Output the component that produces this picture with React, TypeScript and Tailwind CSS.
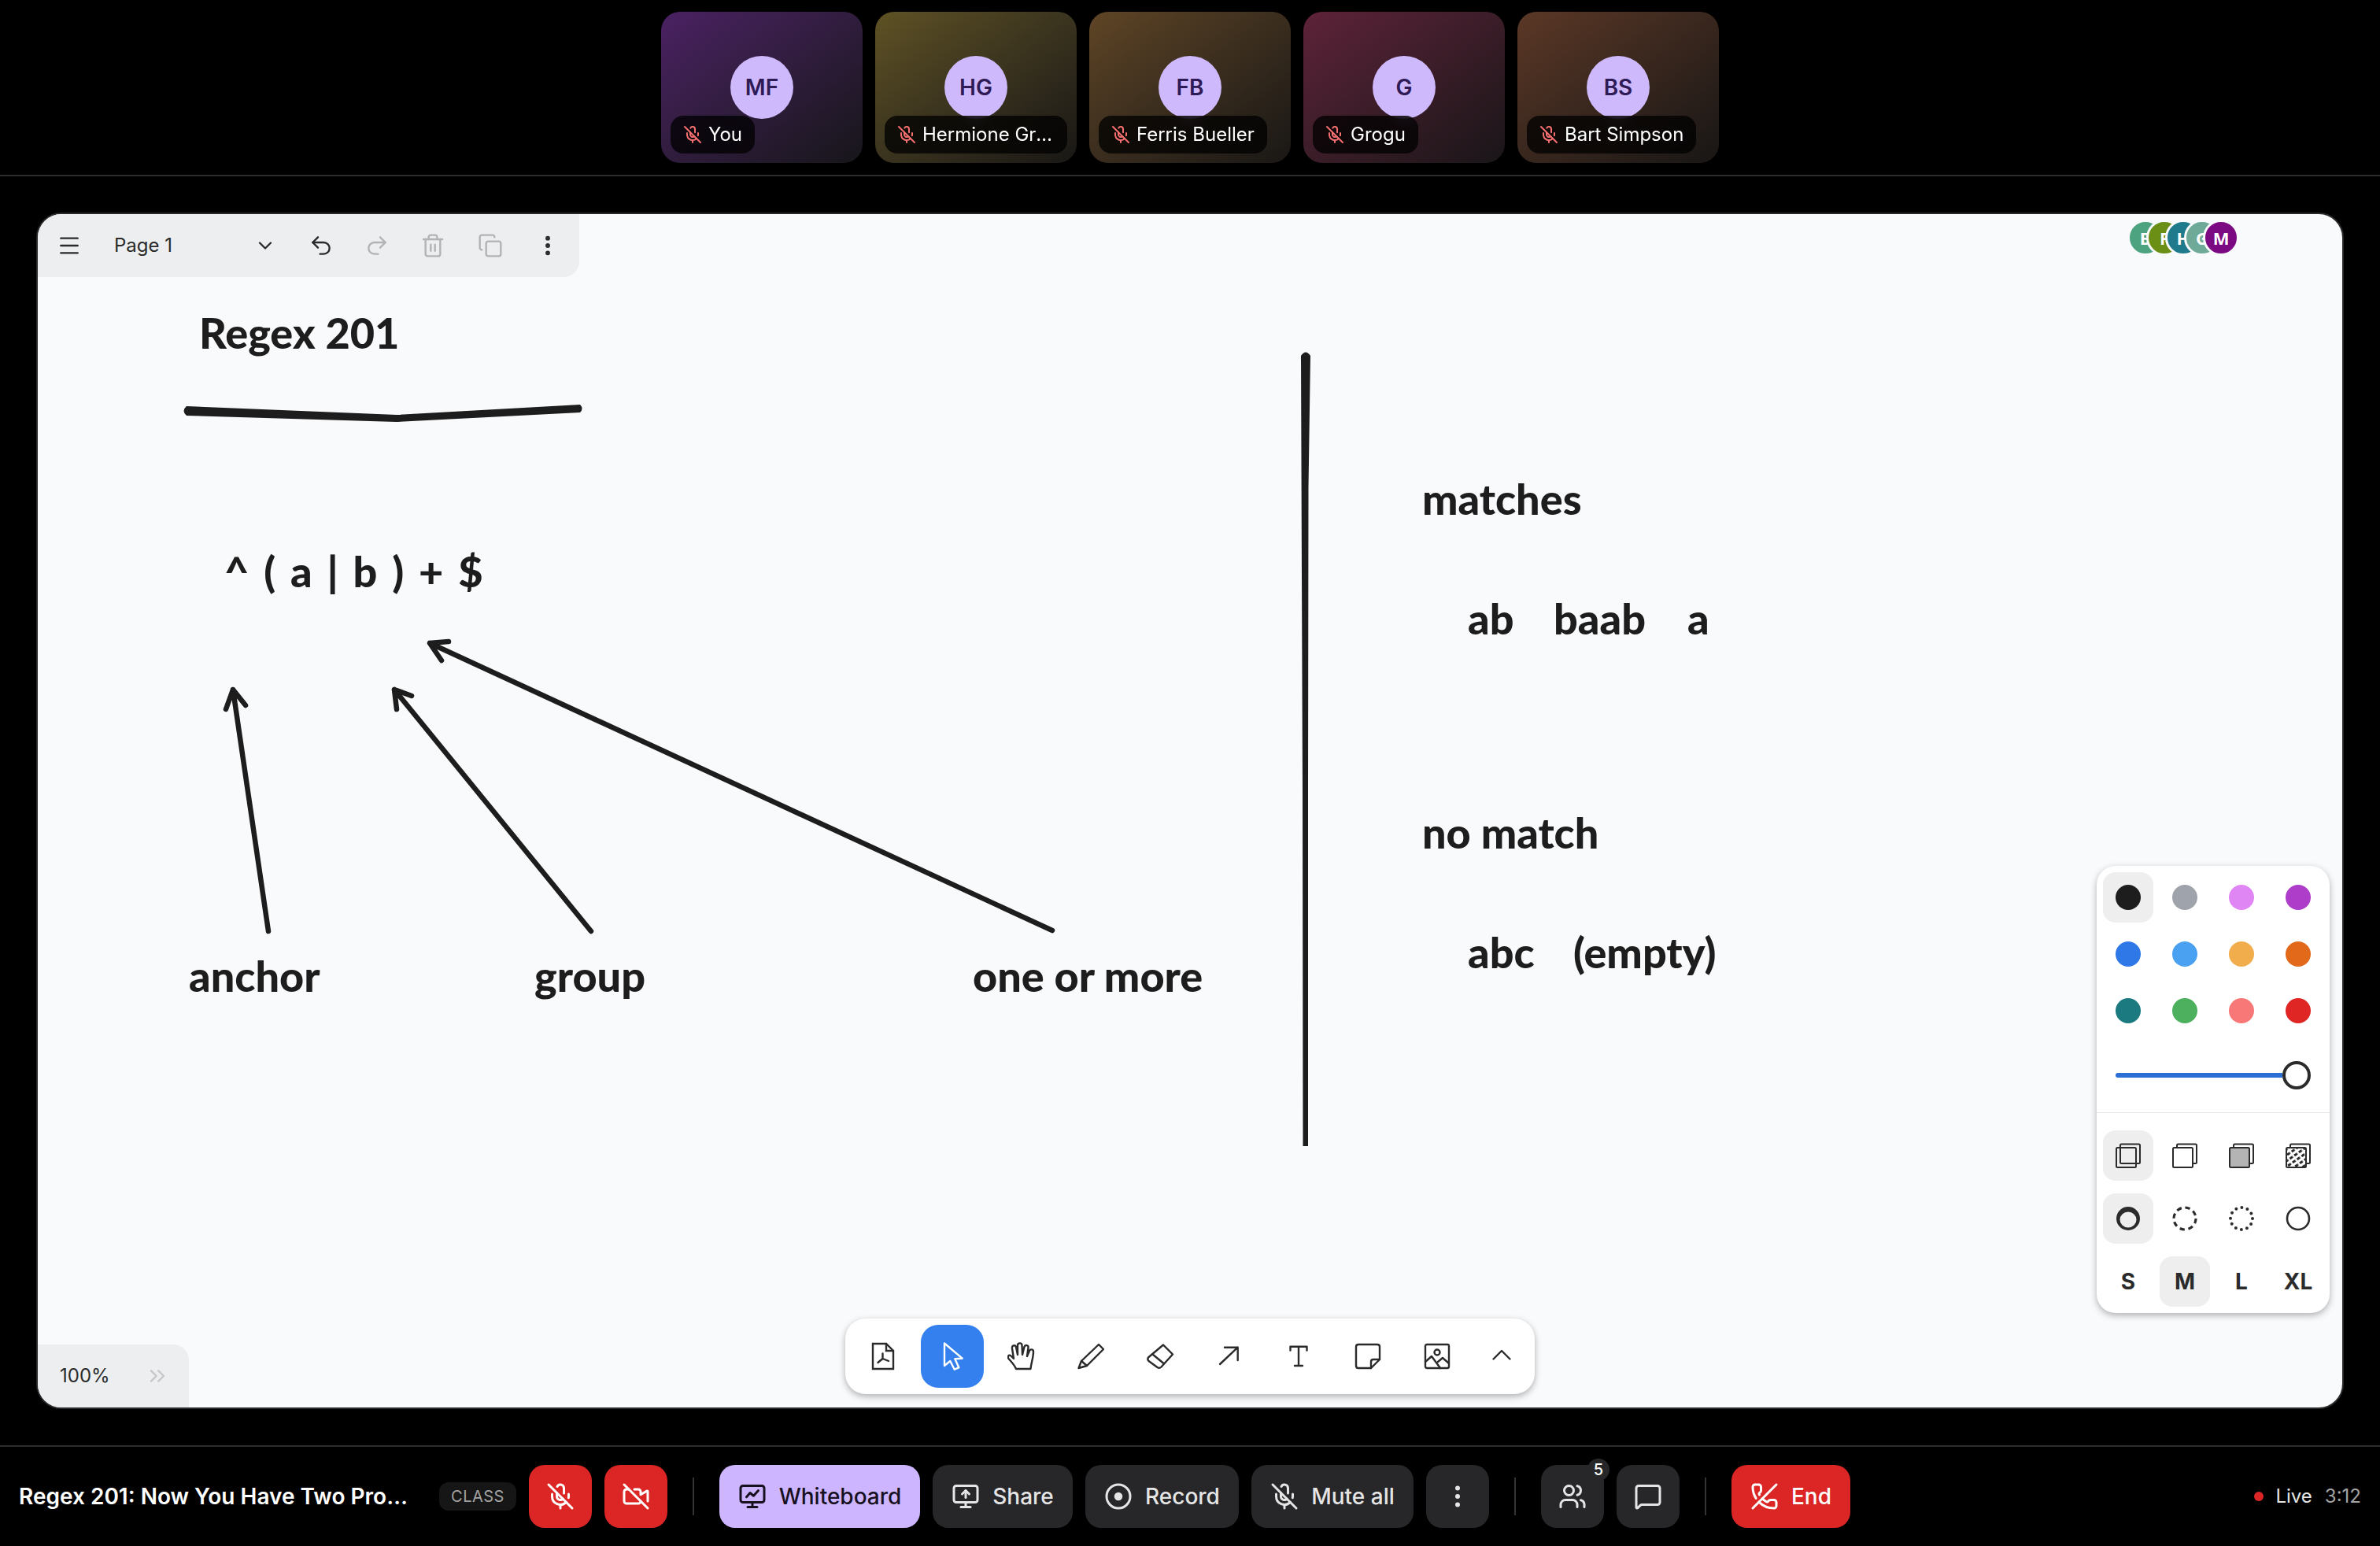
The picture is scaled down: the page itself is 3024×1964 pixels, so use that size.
import {
  ChevronDown,
  ChevronsRight,
  Copy,
  EllipsisVertical,
  Menu,
  MessageSquare,
  MicOff,
  MonitorUp,
  PhoneOff,
  Redo2,
  Trash2,
  Undo2,
  Users,
  VideoOff,
} from "lucide-react";
import type { ReactNode } from "react";

const tiles = [
  { initials: "MF", name: "You", bg: "bg-gradient-to-br from-[#4b2163] to-[#17151a]" },
  { initials: "HG", name: "Hermione Granger", bg: "bg-gradient-to-br from-[#5f5224] to-[#191715]" },
  { initials: "FB", name: "Ferris Bueller", bg: "bg-gradient-to-br from-[#5f4525] to-[#191715]" },
  { initials: "G", name: "Grogu", bg: "bg-gradient-to-br from-[#5e2239] to-[#191518]" },
  { initials: "BS", name: "Bart Simpson", bg: "bg-gradient-to-br from-[#5c3826] to-[#181615]" },
];

const colors = [
  "bg-[#1d1d1d]",
  "bg-[#9fa3ab]",
  "bg-[#e085f4]",
  "bg-[#ae3ec9]",
  "bg-[#2f78e8]",
  "bg-[#4ba1f1]",
  "bg-[#f1ac4b]",
  "bg-[#e16919]",
  "bg-[#1a7a80]",
  "bg-[#4cb05e]",
  "bg-[#f87777]",
  "bg-[#e02525]",
];

const viewers = [
  { letter: "B", bg: "bg-[#4da27f]" },
  { letter: "F", bg: "bg-[#6b8e14]" },
  { letter: "H", bg: "bg-[#1f7a8c]" },
  { letter: "G", bg: "bg-[#6fa998]" },
  { letter: "M", bg: "bg-[#7b0a82]" },
];

function Tile({ initials, name, bg }: { initials: string; name: string; bg: string }) {
  return (
    <div className={`relative flex h-[192px] w-[256px] items-center justify-center rounded-[24px] ${bg}`}>
      <div className="flex size-[80px] items-center justify-center rounded-full bg-[#cfb9fd] text-[28px] font-semibold text-[#2e1a55]">
        {initials}
      </div>
      <div className="absolute bottom-3 left-3 flex h-[48px] max-w-[232px] items-center gap-2 rounded-[16px] bg-black/75 px-4 backdrop-blur-sm">
        <MicOff size={24} className="shrink-0 text-[#f87171]" />
        <span className="truncate text-[24px] text-white">{name}</span>
      </div>
    </div>
  );
}

function ToolIcon({ children }: { children: ReactNode }) {
  return (
    <svg
      width="36"
      height="36"
      viewBox="0 0 36 36"
      fill="none"
      stroke="#2a2a2a"
      strokeWidth="2.4"
      strokeLinecap="round"
      strokeLinejoin="round"
    >
      {children}
    </svg>
  );
}

function ToolButton({ children, active }: { children: ReactNode; active?: boolean }) {
  return (
    <div
      className={`flex size-[80px] items-center justify-center rounded-[22px] ${active ? "bg-[#3480ee]" : ""}`}
    >
      {children}
    </div>
  );
}

function BottomToolbar() {
  return (
    <div className="absolute bottom-[17px] left-1/2 flex h-[96px] w-[876px] -translate-x-1/2 items-center gap-2 rounded-[26px] bg-white p-2 shadow-[0_3px_8px_rgba(0,0,0,0.3)]">
      <ToolButton>
        <ToolIcon>
          <path d="M5 2H22L31 11V34H5Z" strokeLinejoin="miter" />
          <path d="M22 2V11H31" strokeLinejoin="miter" />
          <path d="M17.5 14.5V21L11.5 26M17.5 21L25 24" />
        </ToolIcon>
      </ToolButton>
      <ToolButton active>
        <svg width="36" height="36" viewBox="0 0 36 36" fill="none" stroke="white" strokeWidth="2.4" strokeLinejoin="round">
          <path d="M8 1.5V30L15.3 24L20.7 34.7L26.3 32.3L21.3 21.3L30.7 20.7Z" />
        </svg>
      </ToolButton>
      <ToolButton>
        <ToolIcon>
          <path d="M11 34C9 29 5 25 1.5 21C0 19 1.5 15.5 4 17L8 21L6 8C5.5 4 10 3 11 6.5L13 16L13 4C13 0.5 18.5 0.5 18.5 4L19 16L21.5 6C22.5 3 27 3.5 26.5 7L25 18L28 11C29 8.5 33 9 33 12C33 20 30 27 29.5 34Z" />
        </ToolIcon>
      </ToolButton>
      <ToolButton>
        <ToolIcon>
          <path d="M2.5 33L6 24L28 3L34 9L13 30Z" />
          <path d="M6 24L13 30" />
        </ToolIcon>
      </ToolButton>
      <ToolButton>
        <ToolIcon>
          <path d="M22 3.5L34 15.5L19.5 31.5C18 33 16 33 14.5 32L3.5 24C2 22.5 2 21 3 19.5Z" />
          <path d="M8.5 15.5L22.5 27" />
        </ToolIcon>
      </ToolButton>
      <ToolButton>
        <ToolIcon>
          <path d="M6 28L28.7 6.7M12 6.7H28.7V23" />
        </ToolIcon>
      </ToolButton>
      <ToolButton>
        <ToolIcon>
          <path d="M7.5 10.5V5.7H28.5V10.5M18 5.7V30M13 30H23" />
        </ToolIcon>
      </ToolButton>
      <ToolButton>
        <ToolIcon>
          <path d="M6 3H30Q33 3 33 6V22L22 33H6Q3 33 3 30V6Q3 3 6 3Z" />
          <path d="M33 22H25Q22 22 22 25V33" />
        </ToolIcon>
      </ToolButton>
      <ToolButton>
        <ToolIcon>
          <rect x="3" y="3" width="30" height="30" rx="2" />
          <circle cx="18" cy="13" r="3.5" />
          <path d="M3 25L11 18L22 33M19 25L25 20L33 27" />
        </ToolIcon>
      </ToolButton>
      <div className="flex h-[80px] w-[68px] items-center justify-center">
        <ToolIcon>
          <path d="M7.5 21.5L18 11L28.5 21.5" />
        </ToolIcon>
      </div>
    </div>
  );
}

function FillIcon({ front }: { front: string }) {
  return (
    <svg width="32" height="32" viewBox="0 0 32 32" stroke="#2b2b2b" strokeWidth="2" strokeLinejoin="round">
      <defs>
        <pattern id="hatch" width="7" height="6" patternUnits="userSpaceOnUse" patternTransform="rotate(-35)">
          <rect width="7" height="6" fill="white" stroke="none" />
          <rect width="4.5" height="3" fill="#2b2b2b" stroke="none" />
        </pattern>
      </defs>
      <rect x="6" y="1.5" width="25" height="24.5" rx="1.5" fill="none" />
      <rect x="1" y="6" width="25" height="25" rx="1.5" fill={front} />
    </svg>
  );
}

function StyleCell({ children, active }: { children: ReactNode; active?: boolean }) {
  return (
    <div className={`flex size-[64px] items-center justify-center rounded-[16px] ${active ? "bg-[#eeeeee]" : ""}`}>
      {children}
    </div>
  );
}

function StylePanel() {
  return (
    <div className="absolute right-4 bottom-[120px] flex w-[296px] flex-col rounded-[24px] bg-white p-2 shadow-[0_3px_8px_rgba(0,0,0,0.3)]">
      <div className="grid grid-cols-4 gap-2">
        {colors.map((color, i) => (
          <StyleCell key={color} active={i === 0}>
            <div className={`size-[32px] rounded-full ${color}`} />
          </StyleCell>
        ))}
      </div>
      <div className="mx-4 flex h-[97px] items-center pt-[3px]">
        <div className="h-[6px] flex-1 rounded-l-full bg-[#2b6fd4]" />
        <div className="size-[36px] rounded-full border-4 border-[#2b2b2b] bg-white" />
      </div>
      <div className="-mx-2 h-px bg-[#e6e6e6]" />
      <div className="grid grid-cols-4 gap-x-2 gap-y-4 pt-[22px]">
        <StyleCell active>
          <FillIcon front="none" />
        </StyleCell>
        <StyleCell>
          <FillIcon front="white" />
        </StyleCell>
        <StyleCell>
          <FillIcon front="#b4b4b4" />
        </StyleCell>
        <StyleCell>
          <FillIcon front="url(#hatch)" />
        </StyleCell>
        <StyleCell active>
          <svg width="32" height="32" viewBox="0 0 32 32">
            <path
              fillRule="evenodd"
              fill="#2b2b2b"
              d="M16 1A15 15 0 1 1 16 31A15 15 0 1 1 16 1ZM16 7.5A10.5 10 0 1 0 16 27.5A10.5 10 0 1 0 16 7.5Z"
            />
          </svg>
        </StyleCell>
        <StyleCell>
          <svg width="32" height="32" viewBox="0 0 32 32" fill="none" stroke="#2b2b2b">
            <circle cx="16" cy="16" r="14" strokeWidth="3.2" strokeDasharray="6.3 4.7" />
          </svg>
        </StyleCell>
        <StyleCell>
          <svg width="32" height="32" viewBox="0 0 32 32" fill="none" stroke="#2b2b2b">
            <circle cx="16" cy="16" r="14" strokeWidth="4" strokeDasharray="0 7.33" strokeLinecap="round" />
          </svg>
        </StyleCell>
        <StyleCell>
          <svg width="32" height="32" viewBox="0 0 32 32" fill="none" stroke="#2b2b2b">
            <circle cx="16" cy="16" r="14" strokeWidth="2.6" />
          </svg>
        </StyleCell>
        {["S", "M", "L", "XL"].map((size) => (
          <StyleCell key={size} active={size === "M"}>
            <span className="text-[28px] font-bold text-[#2b2b2b]">{size}</span>
          </StyleCell>
        ))}
      </div>
    </div>
  );
}

function Drawing() {
  return (
    <svg
      className="absolute inset-0 h-full w-full"
      viewBox="48 272 2928 1516"
      fill="none"
      stroke="#1d1d1d"
      strokeLinecap="round"
      strokeLinejoin="round"
    >
      <path
        fill="#1d1d1d"
        stroke="none"
        d="M237 516Q230 522 237 528L504 536L737 524Q742 519 737 514L504 527Z"
      />
      <path
        fill="#1d1d1d"
        stroke="none"
        d="M1653 452Q1659 443 1665 452L1662.5 620L1662 1000L1662 1456L1655.5 1456L1655 1000Z"
      />
      <g strokeWidth="6.5">
        <path d="M341 1183L296 876M287 901L296 876L312 896" />
        <path d="M751 1183L501 876M504 901L501 876L523 884" />
        <path d="M1337 1182L546 817M570 815L546 817L561 839" />
      </g>
    </svg>
  );
}

const hand = "absolute whitespace-nowrap text-[54px] leading-none font-black text-[#1d1d1d] [font-family:Lato,sans-serif]";

function Canvas() {
  return (
    <div className="relative h-full overflow-hidden rounded-[32px] border-2 border-[#2a2a2a] bg-[#f9fafc]">
      <Drawing />
      <div className={`${hand} top-[124px] left-[205px]`}>Regex 201</div>
      <div className={`${hand} top-[427px] left-[237px] [word-spacing:6px]`}>^ ( a | b ) + $</div>
      <div className={`${hand} top-[941px] left-[192px]`}>anchor</div>
      <div className={`${hand} top-[941px] left-[631px]`}>group</div>
      <div className={`${hand} top-[941px] left-[1188px]`}>one or more</div>
      <div className={`${hand} top-[335px] left-[1759px]`}>matches</div>
      <div className={`${hand} top-[487px] left-[1817px]`}>ab</div>
      <div className={`${hand} top-[487px] left-[1926px]`}>baab</div>
      <div className={`${hand} top-[487px] left-[2096px]`}>a</div>
      <div className={`${hand} top-[759px] left-[1759px]`}>no match</div>
      <div className={`${hand} top-[911px] left-[1817px]`}>abc</div>
      <div className={`${hand} top-[911px] left-[1951px]`}>(empty)</div>

      <div className="absolute top-0 left-0 flex h-[80px] w-[688px] items-center rounded-br-[20px] bg-[#eceef0] text-[#2a2a2a]">
        <div className="flex w-[76px] justify-end pr-[20px]">
          <Menu size={32} strokeWidth={1.8} />
        </div>
        <div className="flex w-[248px] items-center justify-between pr-[21px] pl-[21px]">
          <span className="text-[24px]">Page 1</span>
          <ChevronDown size={28} strokeWidth={2} />
        </div>
        <div className="flex w-[72px] justify-center">
          <Undo2 size={32} strokeWidth={1.8} />
        </div>
        <div className="flex w-[70px] justify-center text-[#b3b3b3]">
          <Redo2 size={32} strokeWidth={1.8} />
        </div>
        <div className="flex w-[72px] justify-center text-[#b3b3b3]">
          <Trash2 size={32} strokeWidth={1.8} />
        </div>
        <div className="flex w-[74px] justify-center text-[#b3b3b3]">
          <Copy size={32} strokeWidth={1.8} />
        </div>
        <div className="flex w-[72px] justify-center">
          <EllipsisVertical size={32} strokeWidth={2.4} />
        </div>
      </div>

      <div className="absolute top-[7px] right-[131px] flex">
        {viewers.map((v) => (
          <div
            key={v.letter}
            className={`-ml-[22px] flex size-[46px] items-center justify-center rounded-full border-[3px] border-[#f9fafc] text-[22px] font-bold text-white [font-family:'Noto_Sans',sans-serif] ${v.bg}`}
          >
            {v.letter}
          </div>
        ))}
      </div>

      <div className="absolute bottom-0 left-0 flex h-[80px] w-[192px] items-center justify-between rounded-tr-[20px] bg-[#eceef0] pr-[24px] pl-[28px]">
        <span className="text-[24px] text-[#2a2a2a]">100%</span>
        <ChevronsRight size={32} strokeWidth={1.8} className="text-[#c8c8c8]" />
      </div>

      <StylePanel />
      <BottomToolbar />
    </div>
  );
}

function BarButton({ children, className }: { children: ReactNode; className: string }) {
  return (
    <div className={`flex h-[80px] shrink-0 items-center justify-center gap-4 rounded-[20px] text-[28px] font-medium ${className}`}>
      {children}
    </div>
  );
}

function Divider() {
  return <div className="mx-4 h-[48px] w-[2px] shrink-0 bg-[#333333]" />;
}

function BottomBar() {
  return (
    <div className="flex h-[128px] shrink-0 items-center gap-4 border-t-2 border-[#2e2e2e] pr-6 pl-6">
      <div className="mr-[18px] w-[500px] truncate text-[28px] font-semibold text-white">
        Regex 201: Now You Have Two Problems
      </div>
      <div className="flex h-[36px] w-[98px] items-center justify-center rounded-[12px] bg-[#161616] text-[20px] tracking-wide text-[#a3a3a3]">
        CLASS
      </div>
      <BarButton className="w-[80px] bg-[#dc2626] text-white">
        <MicOff size={36} />
      </BarButton>
      <BarButton className="w-[80px] bg-[#dc2626] text-white">
        <VideoOff size={36} />
      </BarButton>
      <Divider />
      <BarButton className="w-[255px] bg-[#cdb6ff] text-[#17111f]">
        <svg
          width="36"
          height="36"
          viewBox="0 0 24 24"
          fill="none"
          stroke="currentColor"
          strokeWidth="2"
          strokeLinecap="round"
          strokeLinejoin="round"
        >
          <rect x="2" y="3" width="20" height="14" rx="2" />
          <path d="M12 17v4M8 21h8M7 12.5l3-3.5 3 2.5 4-4.5" />
        </svg>
        Whiteboard
      </BarButton>
      <BarButton className="w-[178px] bg-[#27272a] text-[#e5e5e5]">
        <MonitorUp size={36} />
        Share
      </BarButton>
      <BarButton className="w-[195px] bg-[#27272a] text-[#e5e5e5]">
        <svg width="36" height="36" viewBox="0 0 24 24" fill="none" stroke="currentColor" strokeWidth="2">
          <circle cx="12" cy="12" r="10" />
          <circle cx="12" cy="12" r="3.5" fill="currentColor" stroke="none" />
        </svg>
        Record
      </BarButton>
      <BarButton className="w-[206px] bg-[#27272a] text-[#e5e5e5]">
        <MicOff size={36} />
        Mute all
      </BarButton>
      <BarButton className="w-[80px] bg-[#27272a] text-[#e5e5e5]">
        <EllipsisVertical size={36} />
      </BarButton>
      <Divider />
      <div className="relative shrink-0">
        <BarButton className="w-[80px] bg-[#27272a] text-[#e5e5e5]">
          <Users size={36} />
        </BarButton>
        <div className="absolute -top-2 -right-[7px] flex size-[28px] items-center justify-center rounded-full bg-[#27272a] text-[20px] font-medium text-white">
          5
        </div>
      </div>
      <BarButton className="w-[80px] bg-[#27272a] text-[#e5e5e5]">
        <MessageSquare size={36} />
      </BarButton>
      <Divider />
      <BarButton className="w-[151px] bg-[#dc2626] text-white">
        <PhoneOff size={36} />
        End
      </BarButton>
      <div className="ml-auto flex items-center text-[24px]">
        <div className="mr-[15px] size-[12px] rounded-full bg-[#dc2626]" />
        <span className="mr-4 text-[#e5e5e5]">Live</span>
        <span className="text-[#a3a3a3]">3:12</span>
      </div>
    </div>
  );
}

export default function App() {
  return (
    <div className="flex h-[1964px] w-[3024px] flex-col overflow-hidden bg-black [font-family:Inter,sans-serif]">
      <div className="flex h-[224px] shrink-0 items-center justify-center gap-4 border-b-2 border-[#2e2e2e]">
        {tiles.map((tile) => (
          <Tile key={tile.initials} {...tile} />
        ))}
      </div>
      <div className="min-h-0 flex-1 px-[46px] py-[46px]">
        <Canvas />
      </div>
      <BottomBar />
    </div>
  );
}
